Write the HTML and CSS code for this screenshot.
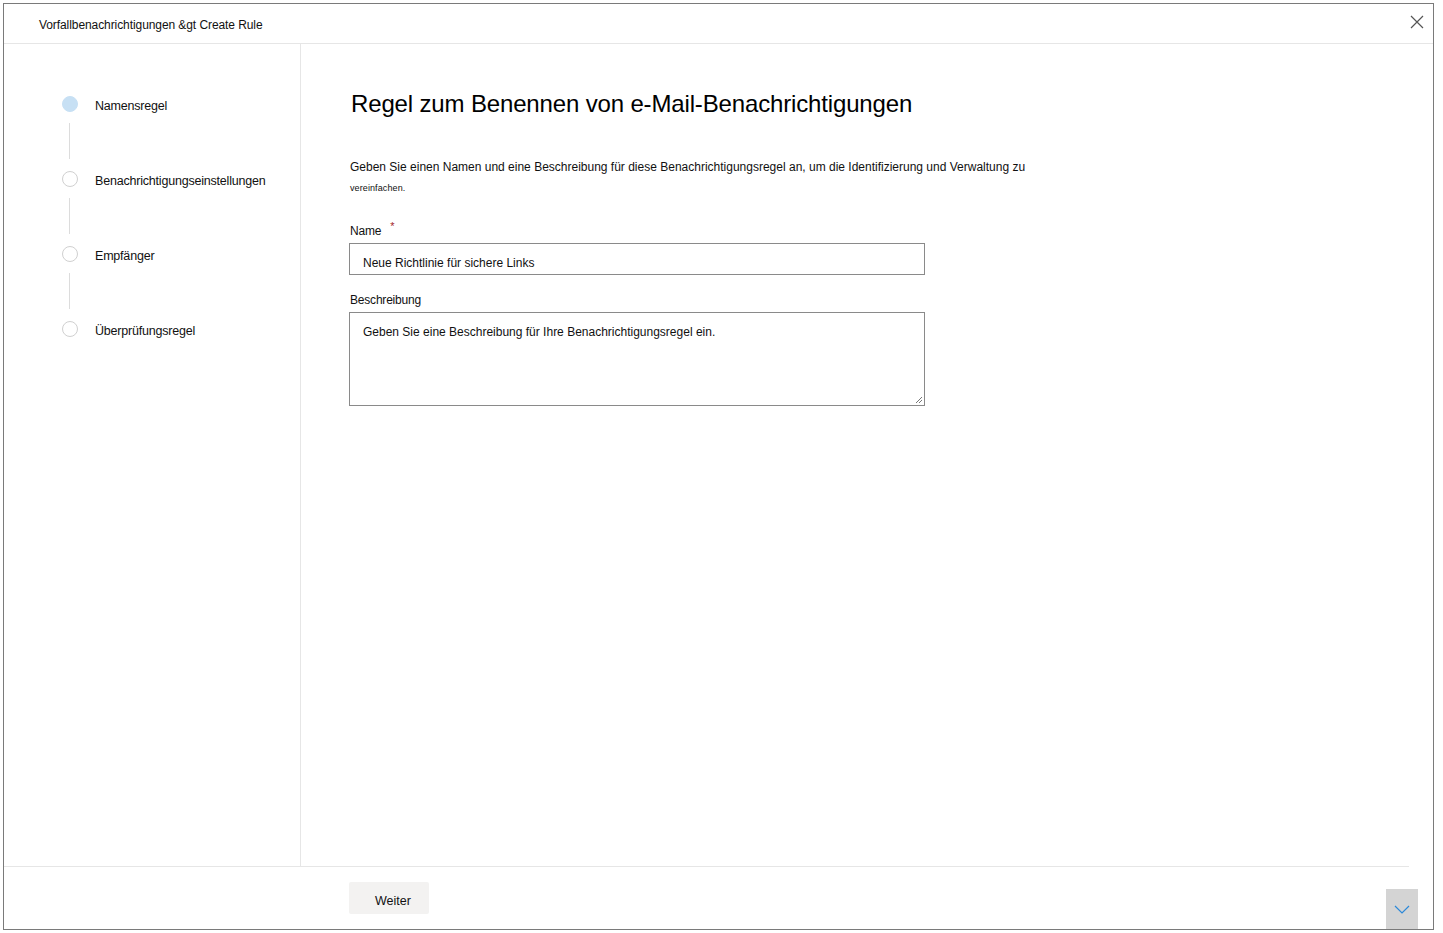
FILE: index.html
```html
<!DOCTYPE html>
<html lang="de">
<head>
<meta charset="utf-8">
<title>Create Rule</title>
<link rel="stylesheet" href="styles.css">
</head>
<body>
<div class="frame">
  <header class="topbar">
    <span class="crumb">Vorfallbenachrichtigungen &amp;gt Create Rule</span>
    <button class="close" aria-label="Schließen">
      <svg width="14" height="14" viewBox="0 0 14 14"><path d="M1 1 L13 13 M13 1 L1 13" stroke="#555" stroke-width="1.2" fill="none"/></svg>
    </button>
  </header>
  <div class="main">
    <nav class="steps">
      <div class="step">
        <span class="dot dot-active"></span><span class="step-label">Namensregel</span>
      </div>
      <div class="connector"></div>
      <div class="step">
        <span class="dot"></span><span class="step-label">Benachrichtigungseinstellungen</span>
      </div>
      <div class="connector"></div>
      <div class="step">
        <span class="dot"></span><span class="step-label">Empfänger</span>
      </div>
      <div class="connector"></div>
      <div class="step">
        <span class="dot"></span><span class="step-label">Überprüfungsregel</span>
      </div>
    </nav>
    <section class="content">
      <h1 class="title">Regel zum Benennen von e-Mail-Benachrichtigungen</h1>
      <p class="intro">Geben Sie einen Namen und eine Beschreibung für diese Benachrichtigungsregel an, um die Identifizierung und Verwaltung zu</p>
      <p class="intro-small">vereinfachen.</p>
      <label class="field-label">Name <span class="req">*</span></label>
      <div class="input">Neue Richtlinie für sichere Links</div>
      <label class="field-label field-label-2">Beschreibung</label>
      <div class="textarea">
        <span>Geben Sie eine Beschreibung für Ihre Benachrichtigungsregel ein.</span>
        <svg class="grip" width="9" height="9" viewBox="0 0 9 9"><path d="M8 2 L2 8 M8 5 L5 8" stroke="#777" stroke-width="1" fill="none"/></svg>
      </div>
    </section>
  </div>
  <footer class="footer">
    <button class="btn">Weiter</button>
  </footer>
  <div class="scrolldown">
    <svg width="16" height="9" viewBox="0 0 16 9"><path d="M1 1 L8 8 L15 1" stroke="#2b88d8" stroke-width="1.2" fill="none"/></svg>
  </div>
</div>
</body>
</html>
```
FILE: styles.css
```css
* { box-sizing: border-box; }
html, body { margin: 0; padding: 0; background: #fff; }
body { font-family: "Liberation Sans", Arial, sans-serif; color: #111; }

.frame {
  position: relative;
  margin: 3px 0 0 3px;
  width: 1431px;
  height: 927px;
  border: 1px solid #7a7a7a;
  display: flex;
  flex-direction: column;
}

.topbar {
  height: 40px;
  flex: none;
  border-bottom: 1px solid #e6e6e6;
  display: flex;
  align-items: center;
  justify-content: space-between;
  padding: 0 2px 0 35px;
}
.crumb { font-size: 12px; letter-spacing: -0.08px; color: #111; padding-top: 3px; }
.close {
  width: 28px; height: 28px;
  border: 0; background: transparent; padding: 0;
  display: flex; align-items: center; justify-content: center;
  margin-top: -4px;
}

.main { flex: 1; display: flex; min-height: 0; }

.steps {
  width: 297px;
  flex: none;
  border-right: 1px solid #e6e6e6;
  padding: 52px 0 0 58px;
  display: flex;
  flex-direction: column;
}
.step { display: flex; align-items: center; height: 16px; }
.dot {
  width: 16px; height: 16px; border-radius: 50%;
  border: 1px solid #d0d0d0; background: #fff; flex: none;
}
.dot-active { background: #c7e0f4; border-color: #c7e0f4; }
.step-label { margin-left: 17px; font-size: 12.5px; letter-spacing: -0.2px; color: #111; padding-top: 3px; }
.connector {
  width: 1px; height: 36px; background: #dcdcdc;
  margin: 11px 0 12px 7px;
}

.content { flex: 1; padding: 45px 0 0 49px; }
.title {
  margin: 0 0 0 1px;
  font-weight: normal;
  font-size: 24px;
  line-height: 30px;
  letter-spacing: -0.15px;
  color: #000;
}
.intro {
  margin: 40px 0 0;
  font-size: 12px;
  line-height: 16px;
  letter-spacing: 0;
  color: #111;
}
.intro-small {
  margin: 7px 0 0;
  font-size: 9px;
  line-height: 12px;
  letter-spacing: 0.1px;
  color: #111;
}
.field-label {
  display: block;
  margin-top: 29px;
  font-size: 12px;
  line-height: 16px;
  letter-spacing: -0.2px;
  color: #111;
}
.field-label-2 { margin-top: 17px; }
.req { color: #a4262c; font-size: 11px; vertical-align: top; position: relative; top: -5px; margin-left: 6px; }

.input {
  margin: 4px 0 0 -1px;
  width: 576px;
  height: 32px;
  border: 1px solid #8a8a8a;
  padding: 12px 13px 0;
  font-size: 12px;
  letter-spacing: 0;
  color: #111;
}
.textarea {
  position: relative;
  margin: 4px 0 0 -1px;
  width: 576px;
  height: 94px;
  border: 1px solid #8a8a8a;
  padding: 12px 13px 0;
  font-size: 12px;
  letter-spacing: 0;
  color: #111;
}
.grip { position: absolute; right: 1px; bottom: 1px; }

.footer {
  height: 63px;
  flex: none;
  border-top: 1px solid #e6e6e6;
  margin-right: 24px;
  padding: 15px 0 0 345px;
}
.btn {
  width: 80px; height: 32px;
  background: #f3f2f1;
  border: 0; border-radius: 2px;
  font-family: "Liberation Sans", Arial, sans-serif;
  font-size: 12.5px;
  color: #111;
  padding: 5px 0 0 8px;
}

.scrolldown {
  position: absolute;
  right: 15px;
  bottom: 0;
  width: 32px;
  height: 40px;
  background: #d4d4d4;
  display: flex;
  align-items: center;
  justify-content: center;
  padding-top: 0;
}
```
